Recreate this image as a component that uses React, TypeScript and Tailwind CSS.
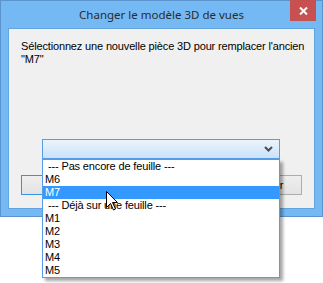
import type { ReactNode } from "react";

const items: { label: string; header?: boolean; selected?: boolean }[] = [
  { label: "--- Pas encore de feuille ---", header: true },
  { label: "M6" },
  { label: "M7", selected: true },
  { label: "--- Déjà sur une feuille ---", header: true },
  { label: "M1" },
  { label: "M2" },
  { label: "M3" },
  { label: "M4" },
  { label: "M5" },
];

export default function App() {
  return (
    <div className="relative h-[283px] w-[323px] overflow-hidden bg-white font-['Liberation_Sans',Arial,sans-serif]">
      <div className="flex h-[217px] w-[323px] flex-col border border-[#5b93cc] bg-[#75b9f4]">
        <TitleBar />
        <div className="mx-[7px] flex h-[181px] flex-col border border-[#64a4dd] bg-[#f0f0f0]">
          <p className="mt-[11px] ml-[12px] w-[296px] whitespace-nowrap text-[11px] leading-[13px] tracking-[-0.15px] text-black">
            Sélectionnez une nouvelle pièce 3D pour remplacer l'ancien
            <br />
            "M7"
          </p>
          <div className="mt-[73px] ml-[33px] flex h-[20px] w-[238px] items-center justify-end border border-[#569de5] bg-gradient-to-b from-[#ecf4fc] to-[#c9e2fb] pr-[6px]">
            <Chevron />
          </div>
          <div className="mt-[16px] flex justify-between px-[12px]">
            <Button focused>OK</Button>
            <Button>Annuler</Button>
          </div>
        </div>
      </div>

      <div className="absolute left-[42px] top-[159px] w-[238px] border border-[#569de5] bg-white shadow-[3px_3px_3px_rgba(0,0,0,0.35)]">
        {items.map((item) => (
          <div
            key={item.label}
            className={`h-[13px] text-[11px] leading-[13px] tracking-[-0.15px] ${
              item.header ? "pl-[5px]" : "pl-[2px]"
            } ${item.selected ? "bg-[#3399ff] text-white" : "text-black"}`}
          >
            {item.label}
          </div>
        ))}
      </div>

      <svg
        className="absolute left-[106px] top-[191px]"
        width="13"
        height="20"
        viewBox="0 0 13 20"
      >
        <path
          d="M0.5 0.5 L0.5 16.5 L4.5 12.5 L7.5 19 L9.5 18 L6.5 11.5 L11.5 11.5 Z"
          fill="white"
          stroke="black"
          strokeWidth="1"
        />
      </svg>
    </div>
  );
}

function TitleBar() {
  return (
    <div className="relative flex h-[27px] items-center justify-center">
      <span className="font-['Noto_Sans',sans-serif] text-[11.5px] text-[#2b2b2b]">
        Changer le modèle 3D de vues
      </span>
      <div className="absolute right-[6px] top-[-1px] flex h-[21px] w-[26px] items-center justify-center bg-[#c75050]">
        <svg width="9" height="8" viewBox="0 0 9 8">
          <path d="M1 0.5 L8 7.5 M8 0.5 L1 7.5" stroke="white" strokeWidth="2" />
        </svg>
      </div>
    </div>
  );
}

function Chevron() {
  return (
    <svg width="9" height="6" viewBox="0 0 9 6">
      <path d="M1 1 L4.5 4.5 L8 1" fill="none" stroke="#4d4d4d" strokeWidth="2" />
    </svg>
  );
}

function Button({ children, focused }: { children: ReactNode; focused?: boolean }) {
  return (
    <div
      className={`flex h-[20px] w-[75px] items-center justify-center border bg-gradient-to-b from-[#efefef] to-[#e3e3e3] text-[11px] text-black ${
        focused ? "border-[#3c8fdc]" : "border-[#adadad]"
      }`}
    >
      {children}
    </div>
  );
}
